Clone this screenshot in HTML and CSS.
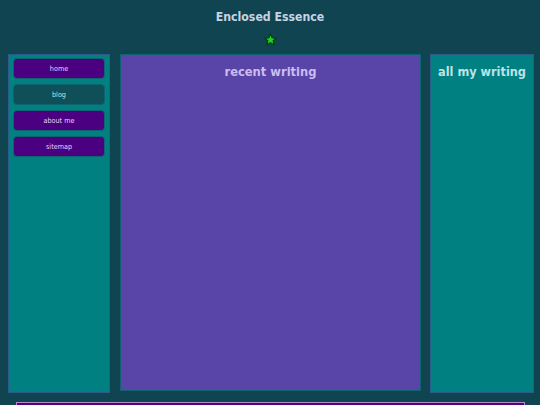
FILE: index.html
```html
<!DOCTYPE html>
<html>
<head>
<meta charset="utf-8">
<link rel="stylesheet" href="styles.css">
</head>
<body>
<header class="header">
  <h1 class="title">Enclosed Essence</h1>
  <svg class="star" width="13" height="13" viewBox="0 0 24 24"><polygon points="12,1.5 15,9 23,9.3 16.8,14.3 19,22.3 12,17.8 5,22.3 7.2,14.3 1,9.3 9,9" fill="#1fd41f" stroke="#0b3a10" stroke-width="2" stroke-linejoin="round"/></svg>
</header>
<div class="layout">
  <nav class="side left">
    <a class="btn purple">home</a>
    <a class="btn dark">blog</a>
    <a class="btn purple">about me</a>
    <a class="btn purple">sitemap</a>
  </nav>
  <main class="main">
    <h2 class="main-title">recent writing</h2>
  </main>
  <aside class="side right">
    <h2 class="right-title">all my writing</h2>
  </aside>
</div>
<footer class="footer"></footer>
</body>
</html>
```
FILE: styles.css
```css
html, body {
  margin: 0;
  padding: 0;
  background: #0f4450;
  font-family: "DejaVu Sans Condensed", "DejaVu Sans", sans-serif;
  overflow: hidden;
  height: 405px;
}
.header {
  display: flex;
  flex-direction: column;
  align-items: center;
  height: 54px;
}
.title {
  margin: 9px 0 0;
  font-size: 12.2px;
  font-weight: bold;
  color: #c6d4e2;
  line-height: 16px;
}
.star {
  margin-top: 8px;
}
.layout {
  display: grid;
  grid-template-columns: 102px 301px 103px;
  column-gap: 10px;
  padding-left: 8px;
  align-items: start;
}
.layout .right {
  margin-left: -1px;
}
.side {
  box-sizing: border-box;
  height: 339px;
  background: #008080;
  border: 1px solid #2b5b8a;
}
.left {
  display: flex;
  flex-direction: column;
  gap: 5px;
  padding: 3px 4px 0 4px;
}
.btn {
  display: flex;
  align-items: center;
  justify-content: center;
  box-sizing: border-box;
  height: 21px;
  border-radius: 4px;
  font-size: 7.2px;
  text-decoration: none;
  border: 1px solid #0d6470;
}
.purple {
  background: #4b0082;
  color: #e2d6f6;
}
.dark {
  background: #0f4f57;
  color: #c2e2e2;
}
.main {
  box-sizing: border-box;
  height: 337px;
  background: #5944a8;
  border: 1px solid #0c6470;
}
.main-title {
  margin: 9px 0 0;
  text-align: center;
  font-size: 12.8px;
  font-weight: bold;
  color: #cbbcf2;
}
.right-title {
  margin: 9px 0 0;
  text-align: center;
  font-size: 12.6px;
  font-weight: bold;
  color: #bde3ea;
  white-space: nowrap;
}
.footer {
  box-sizing: border-box;
  margin: 9px 0 0 16px;
  width: 509px;
  height: 20px;
  background: #55007a;
  border: 1px solid #b08ad0;
}
```
